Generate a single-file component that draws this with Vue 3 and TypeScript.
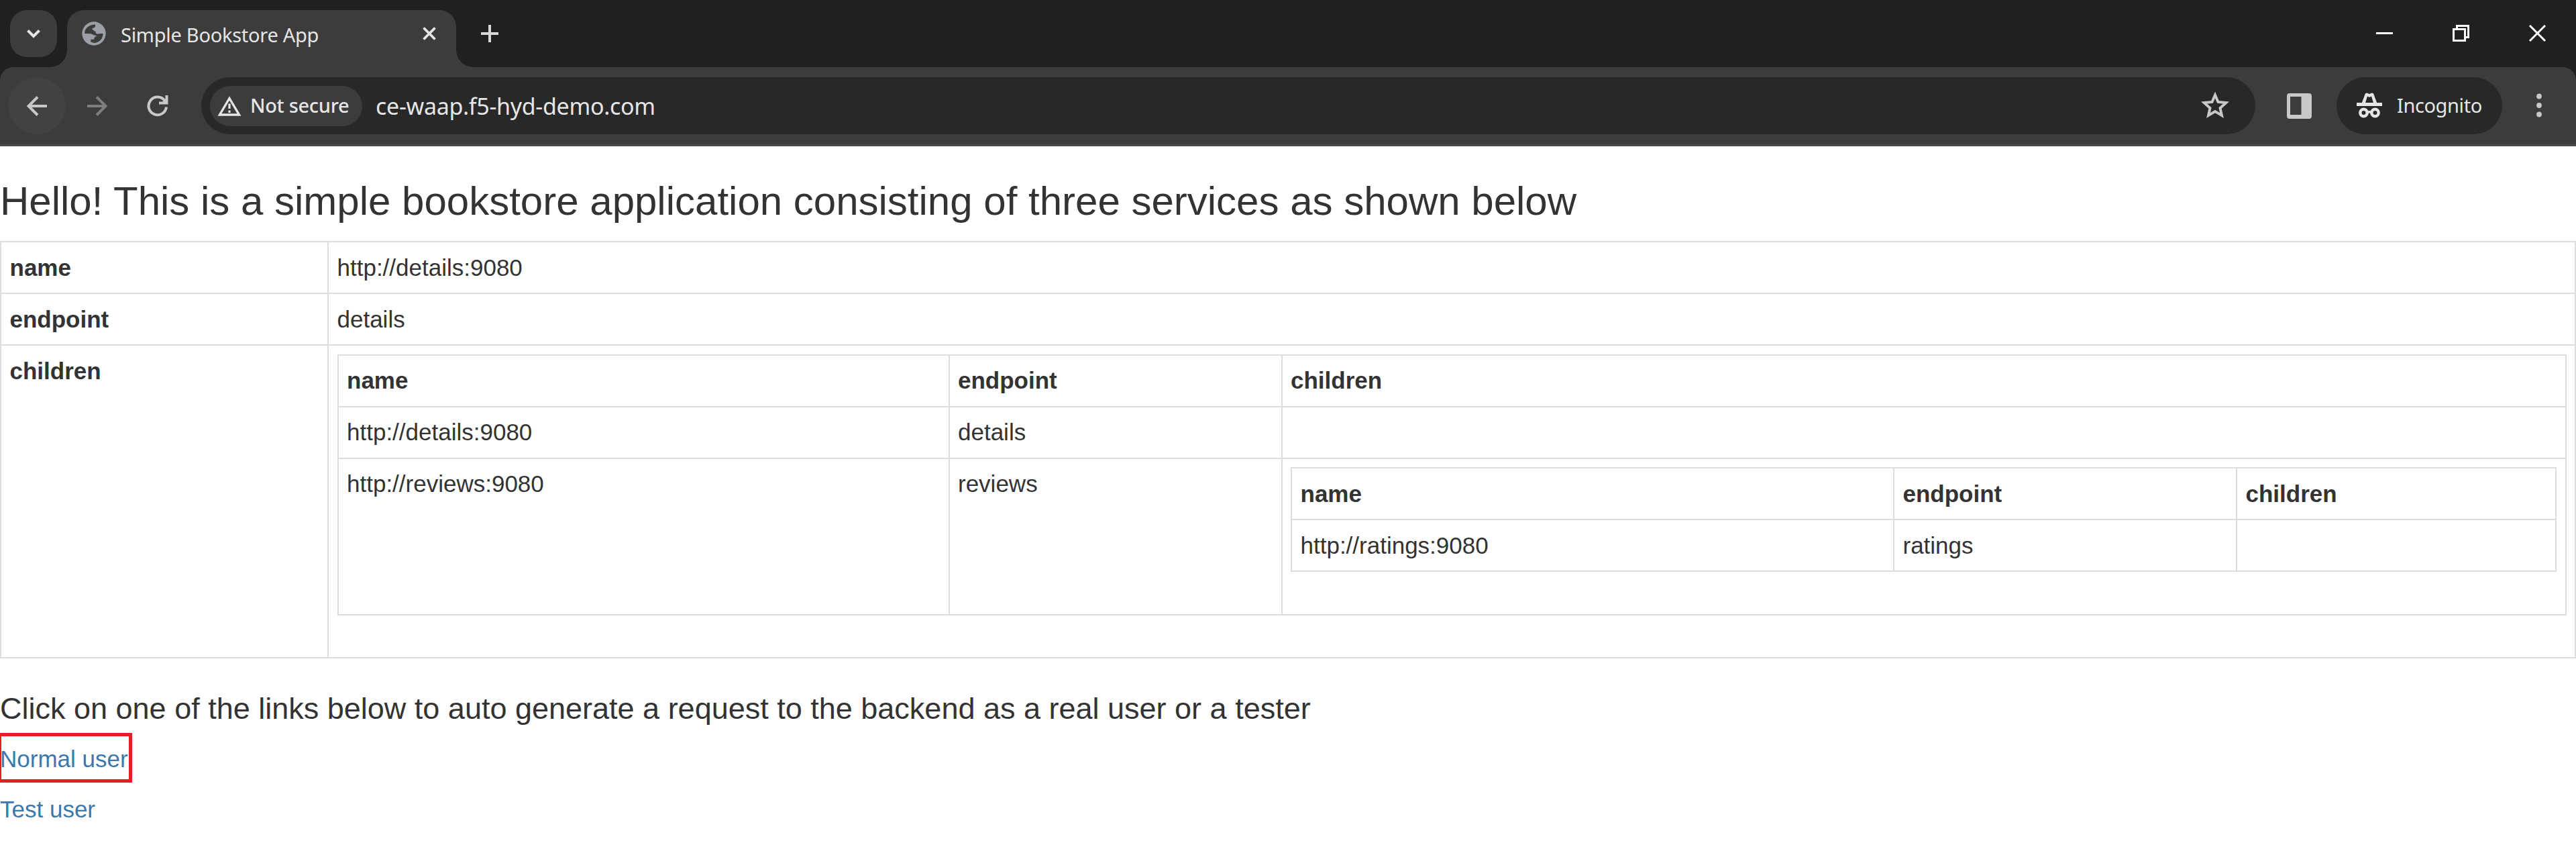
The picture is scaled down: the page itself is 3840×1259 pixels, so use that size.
<script setup lang="ts">
interface Service {
  name: string
  endpoint: string
}

const fields: string[] = ['name', 'endpoint', 'children']
const details: Service = { name: 'http://details:9080', endpoint: 'details' }
const reviews: Service = { name: 'http://reviews:9080', endpoint: 'reviews' }
const ratings: Service = { name: 'http://ratings:9080', endpoint: 'ratings' }
</script>

<template>
  <div class="window">
    <header class="tabstrip">
      <button class="tab-search" aria-label="Search tabs">
        <svg width="20" height="13" viewBox="0 0 20 13"><path d="M1.5 1.5 10 10l8.500-8.500" fill="none" stroke="#e6e6e6" stroke-width="4" /></svg>
      </button>
      <div class="tab">
        <svg class="globe" width="36" height="36" viewBox="38 37 106 106">
          <circle cx="91" cy="90" r="52" fill="#9aa0a6" />
          <path d="M50 90C50 66 70 50 97 50V60Q97 63 92 64Q81 66 84 73Q92 74 92 83Q91 90 82 91Z" fill="#3c3c3c" />
          <path d="M92 78Q99 78 99 87Q104 94 112 91L131 90C131 112 114 131 91 131L77 127V116H91Q92 102 105 101Q91 98 78 91L90 84Z" fill="#3c3c3c" />
        </svg>
        <span class="tab-title">Simple Bookstore App</span>
        <svg class="tab-close" width="20" height="20" viewBox="0 0 20 20"><path d="M1.500 1.500l17 17M18.500 1.500l-17 17" stroke="#e6e6e6" stroke-width="3.800" /></svg>
      </div>
      <svg class="new-tab" width="26" height="26" viewBox="0 0 26 26"><path d="M13 0v26M0 13h26" stroke="#d8d8d8" stroke-width="4" /></svg>
      <div class="controls">
        <svg width="26" height="26" viewBox="0 0 26 26"><path d="M0 12.500h25" stroke="#fff" stroke-width="3" /></svg>
        <svg width="26" height="26" viewBox="0 0 26 26"><path d="M1.500 6.500h17v17h-17zM6.500 5V1.500h17v17H20" fill="none" stroke="#fff" stroke-width="3" /></svg>
        <svg width="26" height="26" viewBox="0 0 26 26"><path d="M1 1l23 23M24 1L1 24" stroke="#fff" stroke-width="3" /></svg>
      </div>
    </header>

    <div class="toolbar-back">
      <div class="toolbar">
        <button class="round lit" aria-label="Back">
          <svg width="30" height="30" viewBox="0 0 30 30"><path d="M30 15H3M16 1.500 2.500 15 16 28.500" fill="none" stroke="#c8c8c8" stroke-width="4" /></svg>
        </button>
        <button class="round" aria-label="Forward">
          <svg width="30" height="30" viewBox="0 0 30 30"><path d="M0 15h27M14 1.500 27.500 15 14 28.500" fill="none" stroke="#7e7e7e" stroke-width="4" /></svg>
        </button>
        <button class="round" aria-label="Reload">
          <svg width="32" height="32" viewBox="0 0 32 32"><path d="M29 17.500A13.300 13.300 0 1 1 26.500 8M29.500 0v11.500H18" fill="none" stroke="#c8c8c8" stroke-width="4" /><path d="M21 11.500 29 4v7.500z" fill="#c8c8c8" /></svg>
        </button>
        <div class="omnibox">
          <div class="chip">
            <svg width="36" height="30" viewBox="0 0 36 30"><path d="M18 3.500 32.500 28h-29z" fill="none" stroke="#e6e6e6" stroke-width="3.400" /><path d="M18 11.500v7.500M18 21.500v3.500" stroke="#e6e6e6" stroke-width="3.200" /></svg>
            <span>Not secure</span>
          </div>
          <span class="url">ce-waap.f5-hyd-demo.com</span>
          <svg class="star" width="42" height="40" viewBox="0 0 42 40"><path d="M21 4.500 25.500 15 37.500 16 28.500 24 31 35 21 29 11 35 13.500 24 4.500 16 16.500 15Z" fill="none" stroke="#c8c8c8" stroke-width="3.900" /></svg>
        </div>
        <svg class="panel" width="37" height="38" viewBox="0 0 37 38"><path fill-rule="evenodd" d="M4 0h29a4 4 0 0 1 4 4v30a4 4 0 0 1-4 4H4a4 4 0 0 1-4-4V4a4 4 0 0 1 4-4zM5 5v27h16.500V5z" fill="#c8c8c8" /></svg>
        <div class="incognito">
          <svg width="38" height="38" viewBox="0 0 38 38">
            <path d="M0 15h38v5H0z" fill="#e6e6e6" />
            <path fill-rule="evenodd" d="M7.500 16 12.500 2.500Q13.500 0 16 .8L19 2l3-1.200q2.500-.8 3.500 1.700L30.500 16zM13 15.200h12L22 5.500 19 7l-3-1.500z" fill="#e6e6e6" />
            <g fill="none" stroke="#e6e6e6" stroke-width="4.400"><circle cx="10.500" cy="30" r="5.200" /><circle cx="27.500" cy="30" r="5.200" /><path d="M15.500 29.500q3.500-1.600 7 0" stroke-width="3.600" /></g>
          </svg>
          <span>Incognito</span>
        </div>
        <svg class="menu" width="8" height="36" viewBox="0 0 8 36"><g fill="#c8c8c8"><circle cx="4" cy="4.500" r="3.900" /><circle cx="4" cy="18" r="3.900" /><circle cx="4" cy="31.500" r="3.900" /></g></svg>
      </div>
    </div>

    <main>
      <h3>Hello! This is a simple bookstore application consisting of three services as shown below</h3>
      <table class="outer">
        <colgroup><col class="o1" /><col /></colgroup>
        <tbody>
          <tr><th>name</th><td>{{ details.name }}</td></tr>
          <tr><th>endpoint</th><td>{{ details.endpoint }}</td></tr>
          <tr>
            <th>children</th>
            <td>
              <table class="nested">
                <colgroup><col class="m1" /><col class="m2" /><col /></colgroup>
                <tbody>
                  <tr><th v-for="f in fields" :key="f">{{ f }}</th></tr>
                  <tr><td>{{ details.name }}</td><td>{{ details.endpoint }}</td><td></td></tr>
                  <tr>
                    <td>{{ reviews.name }}</td>
                    <td>{{ reviews.endpoint }}</td>
                    <td>
                      <table class="nested">
                        <colgroup><col class="i1" /><col class="i2" /><col /></colgroup>
                        <tbody>
                          <tr><th v-for="f in fields" :key="f">{{ f }}</th></tr>
                          <tr><td>{{ ratings.name }}</td><td>{{ ratings.endpoint }}</td><td></td></tr>
                        </tbody>
                      </table>
                    </td>
                  </tr>
                </tbody>
              </table>
            </td>
          </tr>
        </tbody>
      </table>
      <h4>Click on one of the links below to auto generate a request to the backend as a real user or a tester</h4>
      <p class="marked"><a>Normal user</a></p>
      <p><a>Test user</a></p>
    </main>
  </div>
</template>

<style>
html,
body {
  margin: 0;
  background: #fff;
  overflow: hidden;
}
</style>

<style scoped>
.window {
  width: 3840px;
  height: 1259px;
  overflow: hidden;
  background: #fff;
  color: #333;
  font: 35px/50px "Liberation Sans", Arial, sans-serif;
}
svg {
  display: block;
  flex: none;
}
button {
  border: 0;
  padding: 0;
  background: none;
  display: flex;
  align-items: center;
  justify-content: center;
}
.tabstrip {
  height: 100px;
  background: #202020;
  display: flex;
  align-items: flex-start;
  font-family: "Noto Sans", "Open Sans", sans-serif;
}
.tab-search {
  width: 70px;
  height: 70px;
  margin: 15px 15px 0;
  border-radius: 25px;
  background: #3c3c3c;
}
.tab {
  position: relative;
  box-sizing: border-box;
  width: 580px;
  height: 85px;
  margin-top: 15px;
  padding: 0 30px 15px 22px;
  border-radius: 25px 25px 0 0;
  background: #3c3c3c;
  display: flex;
  align-items: center;
}
.tab::before,
.tab::after {
  content: "";
  position: absolute;
  bottom: 0;
  width: 25px;
  height: 25px;
}
.tab::before {
  left: -25px;
  background: radial-gradient(circle at 0 0, transparent 24.500px, #3c3c3c 25px);
}
.tab::after {
  right: -25px;
  background: radial-gradient(circle at 100% 0, transparent 24.500px, #3c3c3c 25px);
}
.tab-title {
  margin-left: 22px;
  padding-top: 4px;
  font-size: 29px;
  letter-spacing: -0.27px;
  line-height: 40px;
  color: #e6e6e6;
  white-space: nowrap;
}
.tab-close {
  margin-left: auto;
}
.new-tab {
  margin: 37px 0 0 37px;
}
.controls {
  margin: 37px 44px 0 auto;
  display: flex;
  gap: 88px;
}
.toolbar-back {
  background: #202020;
}
.toolbar {
  box-sizing: border-box;
  height: 118px;
  padding: 15px 51px 15px 12px;
  border-radius: 20px 20px 0 0;
  background: #3c3c3c;
  box-shadow: inset 0 -3px #4a4a4a;
  display: flex;
  align-items: flex-start;
  color: #e6e6e6;
  font-family: "Noto Sans", "Open Sans", sans-serif;
}
.round {
  width: 86px;
  height: 85px;
  margin-right: 4px;
  border-radius: 50%;
}
.round.lit {
  background: #424242;
}
.omnibox {
  box-sizing: border-box;
  width: 3062px;
  height: 85px;
  margin-left: 18px;
  padding: 0 39px 0 13px;
  border-radius: 43px;
  background: #282828;
  display: flex;
  align-items: center;
}
.chip {
  box-sizing: border-box;
  width: 227px;
  height: 60px;
  padding-left: 11px;
  border-radius: 30px;
  background: #3c3c3c;
  display: flex;
  align-items: center;
  font-size: 29px;
  font-weight: 500;
  line-height: 40px;
  white-space: nowrap;
}
.chip span {
  margin: -2px 0 0 13px;
  letter-spacing: -0.3px;
}
.url {
  margin-left: 20px;
  font-size: 34px;
  line-height: 50px;
  letter-spacing: -0.31px;
}
.star {
  margin: -2px 0 0 auto;
}
.panel {
  margin: 24px 0 0 47px;
}
.incognito {
  box-sizing: border-box;
  width: 247px;
  height: 85px;
  margin-left: 37px;
  padding-left: 30px;
  border-radius: 43px;
  background: #282828;
  display: flex;
  align-items: center;
  font-size: 29px;
  line-height: 40px;
}
.incognito span {
  margin: -2px 0 0 22px;
  letter-spacing: -0.4px;
}
.incognito svg {
  margin-top: -2px;
}
.menu {
  margin: 24px 0 0 51px;
}
h3,
h4 {
  font-weight: 400;
  line-height: 1.1;
  white-space: nowrap;
}
h3 {
  margin: 49px 0 26px;
  font-size: 60px;
}
table {
  width: 100%;
  table-layout: fixed;
  border-collapse: collapse;
  margin: 0 0 50px;
}
th,
td {
  border: 2px solid #ddd;
  padding: 12.500px;
  text-align: left;
  vertical-align: top;
}
.o1 { width: 488px; }
.m1 { width: 911px; }
.m2 { width: 496px; }
.i1 { width: 898px; }
.i2 { width: 511px; }
h4 {
  margin: 0 0 25px;
  font-size: 45px;
}
p {
  margin: 0 0 25px;
}
a {
  color: #3c78ab;
}
.marked {
  position: relative;
}
.marked::after {
  content: "";
  position: absolute;
  left: -3px;
  top: -13.500px;
  width: 190px;
  height: 64px;
  border: 5px solid #e31e24;
}
</style>
